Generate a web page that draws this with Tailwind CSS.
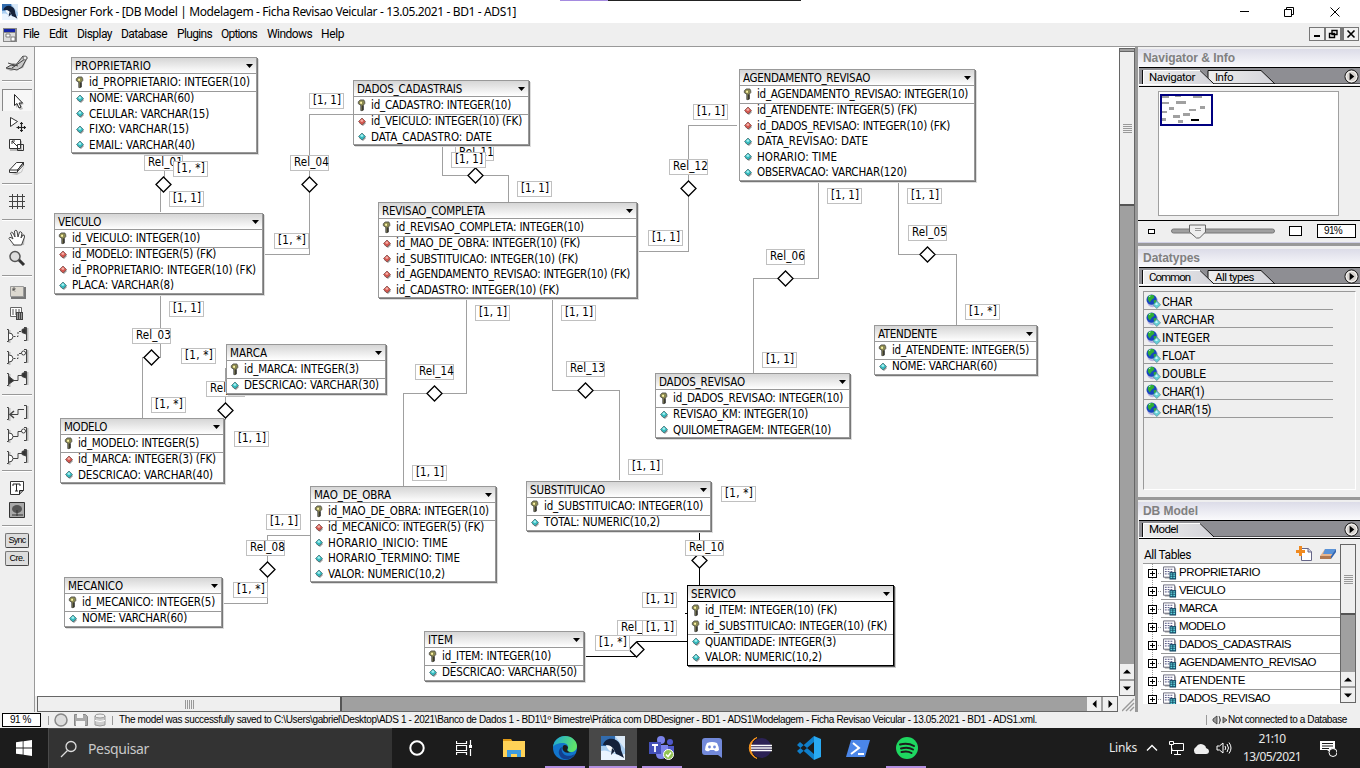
<!DOCTYPE html>
<html lang="pt-BR">
<head>
<meta charset="utf-8">
<title>DBDesigner Fork</title>
<script src="https://cdn.jsdelivr.net/npm/@tailwindcss/browser@4"></script>
</head>
<body class="w-[1360px] h-[768px] overflow-hidden flex flex-col bg-white text-black font-['Liberation_Sans',sans-serif] text-[12px] leading-none whitespace-nowrap">

<svg class="hidden">
  <symbol id="key" viewBox="0 0 10 14"><path d="M3 13V5h4v6l-1 2z" fill="#999" /><path d="M1 3l2-2h4l1 2v2L6 7v5l-1 1-1-1V7L1 5z" fill="#8a8850" stroke="#444" stroke-width=".8"/><path d="M3 3h2v2H3z" fill="#fff7a8"/><path d="M6 7v5" stroke="#111" /></symbol>
  <symbol id="blue" viewBox="0 0 10 10"><path d="M5 2l4 4-3 3-4-3z" fill="#999"/><path d="M5 1l3.500 3.500L5 8 1.500 4.500z" fill="#35b8bc" stroke="#4a7478" stroke-width=".8"/><path d="M5 2l1.500 2L5 5 3 4z" fill="#a5f3f3"/></symbol>
  <symbol id="red" viewBox="0 0 10 10"><path d="M5 2l4 4-3 3-4-3z" fill="#999"/><path d="M5 1l3.500 3.500L5 8 1.500 4.500z" fill="#d2574f" stroke="#84504c" stroke-width=".8"/><path d="M5 2l1.500 2L5 5 3 4z" fill="#f8b0a8"/></symbol>
  <symbol id="globe" viewBox="0 0 16 16"><circle cx="7" cy="8" r="6" fill="#b9b5e0"/><circle cx="6" cy="6" r="5.500" fill="#1746c0"/><path d="M4 1l4 0 1 3-3 2-2 3-2-3 0-3zM8 7l3-1 0 3-2 2z" fill="#2fae36"/><path d="M3 2l2-.5-1 2z" fill="#c8f0ff"/><path d="M11.500 7.500l4 4-4 4-4-4z" fill="#62cfd6" stroke="#5b8c98" stroke-width=".8"/><path d="M11 9l2 2-2 1-1.500-1z" fill="#c9f8f8"/></symbol>
  <symbol id="tbl" viewBox="0 0 15 14"><path d="M2 2h12v11H2z" fill="#aaa"/><path d="M.5.5h12v11H.5z" fill="#fff" stroke="#667"/><path d="M2 3h9M2 5.500h9M2 8h9" stroke="#447" stroke-dasharray="2 1"/><path d="M7 6h7v8H7z" fill="#164a66"/><path d="M8 8h2M11 8h2M8 10h2M11 10h2M8 12h2M11 12h2" stroke="#7ff"/></symbol>
  <symbol id="play" viewBox="0 0 16 16"><circle cx="8" cy="8" r="7" fill="#d8d4d0" stroke="#111"/><circle cx="8" cy="8" r="5.600" fill="none" stroke="#fff" stroke-width=".8"/><path d="M6 4v8l5-4z" fill="#000"/></symbol>
  <symbol id="whale" viewBox="0 0 24 24"><path d="M0 0h24v24H0z" fill="#a9cdf0"/><path d="M0 0h14v10H0z" fill="#326cae"/><path d="M14 0h10v13z" fill="#dbe9f7"/><path d="M0 15c8-3 12 6 24 3v6H0z" fill="#eaf4ff"/><path d="M2 9c1-5 7-8 13-5 4 2 5 7 5 10 1 3 2 5 3 8-3-2-5-3-8-4-2-6-6-9-13-9z" fill="#13203a"/><path d="M5 9c5 0 8 3 9 8-5-1-8-4-9-8z" fill="#f4f8fc"/><path d="M11 12l-1 7 4-4z" fill="#13203a"/></symbol>
</svg>

<!-- window title -->
<header class="h-[23px] shrink-0 flex items-center relative">
  <div class="absolute left-[560px] top-0 w-[241px] h-px bg-[#222]"></div><div class="absolute left-[560px] top-0 w-[48px] h-px bg-[#a58be0]"></div>
  <svg class="ml-[2px] w-4 h-4"><use href="#whale"/></svg>
  <span data-w="493" class="ml-[5px] font-['Noto_Sans',sans-serif] text-[12px]">DBDesigner Fork - [DB Model | Modelagem - Ficha Revisao Veicular - 13.05.2021 - BD1 - ADS1]</span>
  <svg class="ml-auto mr-[10px] w-[110px] h-[20px]" fill="none" stroke="#000"><path d="M-1 9.500h10M44.500 7.500h7v7h-7zM46.500 7.500v-2h7v7h-2M90.500 5.500l9 9M99.500 5.500l-9 9"/></svg>
</header>

<!-- menu -->
<nav class="h-[24px] shrink-0 bg-[#efefef] border-b border-[#999] flex items-center">
  <svg class="ml-[3px] w-[14px] h-[14px]"><path d="M0 0h14v14H0z" fill="#888"/><path d="M1 1h11v3H1z" fill="#1424a8"/><path d="M1 5h11v8H1z" fill="#ddd"/><path d="M3 6h4v3H3zM8 9h4v4H8z" fill="#fff" stroke="#666" stroke-width=".8"/></svg>
  <div class="flex items-center h-full -mt-px font-['Roboto',sans-serif]">
    <span data-w="16" class="ml-[6px]">File</span><span data-w="18" class="ml-[10px]">Edit</span><span data-w="35" class="ml-[10px]">Display</span><span data-w="46" class="ml-[9px]">Database</span><span data-w="35" class="ml-[10px]">Plugins</span><span data-w="36" class="ml-[9px]">Options</span><span data-w="45" class="ml-[10px]">Windows</span><span data-w="23" class="ml-[9px]">Help</span>
  </div>
  <svg class="ml-auto mr-px w-[50px] h-[14px] -mt-px"><path d="M0 0h50v14H0z" fill="#777"/><path d="M1 1h14v12H1zM17 1h14v12H17zM35 1h14v12H35z" fill="#f1f1f1"/><path d="M5 8h6v2H5z"/><path d="M23 3.500h5v4h-5zM20.500 6.500h5v4h-5z" fill="none" stroke="#000" stroke-width="1.400"/><path d="M38.500 3.500l7 7M45.500 3.500l-7 7" stroke="#000" stroke-width="1.600"/></svg>
</nav>

<div class="h-[665px] shrink-0 flex">
  <!-- tool palette -->
  <aside class="w-[35px] shrink-0 bg-[#efefef] border-r border-[#999] flex flex-col items-center">
    <svg class="mt-[7px] w-[24px] h-[20px]"><path d="M1 15l7-6 6 1 6-8 3 1-5 11-9 2-3 1z" fill="#aaa"/><path d="M1 14l5-3 4 1 8-10 4 2-5 9-5 3-5-1zM3 9l10 3M7 14l13-9" fill="#c9c9c9" stroke="#444"/><circle cx="20" cy="4" r="2" fill="#eee" stroke="#666"/></svg>
    <div class="mt-[6px] w-[30px] h-[2px] bg-[#999] border-b border-white"></div>
    <div class="mt-[7px] w-[30px] h-[22px] bg-[#f7f7f7] border-t border-l border-[#888] flex justify-center items-center"><svg class="ml-[3px] mt-[2px] w-[12px] h-[17px]"><path d="M3 3l8 8-3 1 2 4-3 1-2-4-2 2z" fill="#bbb"/><path d="M1.500 1.500v11l2.500-2 2 4.500 2-1-2-4h3.500z" fill="#fff" stroke="#222"/></svg></div>
    <svg class="mt-[4px] w-[18px] h-[20px]"><path d="M2.500 2.500v9l7-5z" fill="#fff" stroke="#333"/><path d="M13.500 7v10M8.500 12.500h10M12 8.500h3M12 15.500h3M10.500 11v3M16.500 11v3" stroke="#222" stroke-width="1.200"/></svg>
    <svg class="mt-[3px] w-[18px] h-[16px]"><path d="M2 3h12v10H2z" fill="#bbb"/><path d="M1.500 1.500h11v9h-11z" fill="#fff" stroke="#333"/><path d="M4 3l5 5M4 6V3h3" fill="none" stroke="#333"/><path d="M9.500 6.500h6v6h-6z" fill="none" stroke="#333"/></svg>
    <svg class="mt-[6px] w-[18px] h-[16px]"><path d="M3 14l10-2 4-8-3 8-5 3z" fill="#bbb"/><path d="M1.500 10l7-7.500h7l-6 7.500zM1.500 10v2.500h7l7-7.500V2.500l-6 7.500v2.500" fill="#fff" stroke="#333"/></svg>
    <div class="mt-[7px] w-[30px] h-[2px] bg-[#999] border-b border-white"></div>
    <svg class="mt-[8px] w-[18px] h-[18px]"><path d="M4.500 1v15M9.500 1v15M14.500 1v15M1 3.500h16M1 8.500h16M1 13.500h16" stroke="#444"/></svg>
    <div class="mt-[8px] w-[30px] h-[2px] bg-[#999] border-b border-white"></div>
    <svg class="mt-[8px] w-[18px] h-[18px]"><path d="M4 17l12-1 1-10-5-3z" fill="#bbb"/><path d="M6 16L1 9.500Q1 8 3 8.500L5 10 2.500 4Q3 2.500 5 4l2 4-.5-6Q8 .5 9 2l1 6 1.500-5Q13 2 14 4l-1 5 2-3q2 0 1.500 2l-3 8z" fill="#fff" stroke="#444"/></svg>
    <svg class="mt-[3px] w-[18px] h-[18px]"><path d="M10 9l6 6" stroke="#333" stroke-width="3"/><circle cx="7" cy="6.500" r="5" fill="#ddd" stroke="#555" stroke-width="1.500"/></svg>
    <div class="mt-[7px] w-[30px] h-[2px] bg-[#999] border-b border-white"></div>
    <svg class="mt-[8px] w-[17px] h-[14px]"><path d="M2 2h15v12H2z" fill="#777"/><path d="M1.500 1.500h13v10h-13z" fill="#ddd9d0" stroke="#999"/><path d="M4 6V3h2v1.500H4l2 2" fill="none" stroke="#444" stroke-width=".7"/></svg>
    <svg class="mt-[7px] w-[16px] h-[16px]"><path d="M1.500 1.500h11v9h-11z" fill="#fff" stroke="#666"/><path d="M3 4h9M3 6h9M3 8h9" stroke="#555" stroke-dasharray="2 1"/><path d="M7 6h7v8H7z" fill="#444"/><path d="M8 8h5M8 10h5M8 12h5" stroke="#eee" stroke-dasharray="1 1"/></svg>
    <div id="relA" class="mt-[2px]"></div>
    <div class="mt-[4px] w-[30px] h-[2px] bg-[#999] border-b border-white"></div>
    <div id="relB" class="mt-[6px]"></div>
    <div class="mt-[2px] w-[30px] h-[2px] bg-[#999] border-b border-white"></div>
    <svg class="mt-[8px] w-[16px] h-[17px]"><path d="M1.500 1.500h13v9l-4 4h-9z" fill="#fff" stroke="#333"/><path d="M14.500 10.500h-4v4" fill="#999" stroke="#222"/><path d="M4 6V4h7v2M7.500 4v7M6 11h3" fill="none" stroke="#222"/></svg>
    <svg class="mt-[5px] w-[16px] h-[16px]"><path d="M.5.5h15v15H.5z" fill="#aaa" stroke="#333"/><ellipse cx="8" cy="7" rx="5" ry="4" fill="#555"/><path d="M8 8v6M3 13h11" stroke="#333"/></svg>
    <div class="mt-[7px] w-[30px] h-[2px] bg-[#999] border-b border-white"></div>
    <div class="mt-[6px] w-[24px] h-[15px] border border-[#777] border-b-[#444] border-r-[#444] rounded-[2px] bg-[#ddd] flex items-center justify-center text-[9px]"><span data-w="17">Sync</span></div>
    <div class="mt-[3px] w-[24px] h-[15px] border border-[#777] border-b-[#444] border-r-[#444] rounded-[2px] bg-[#ddd] flex items-center justify-center text-[9px]"><span data-w="15">Cre.</span></div>
  </aside>

  <!-- model canvas with scrollbars -->
  <div class="w-[1100px] shrink-0 flex flex-col">
    <div class="h-[649px] flex">
      <main id="canvas" class="relative w-[1084px] h-[649px] overflow-hidden bg-white font-['DejaVu_Sans_Condensed','DejaVu_Sans',sans-serif] [font-stretch:75%] text-[11.500px]"></main>
      <div class="w-[16px] mt-px border border-[#666] bg-[#a0a0a0] flex flex-col">
        <div class="h-[3px] border-b border-[#666]"></div>
        <div class="h-[154px] bg-[#efefef] border-b-[2px] border-[#555] flex flex-col items-center justify-center gap-px">
          <div class="w-[9px] h-px bg-[#999]"></div><div class="w-[9px] h-px bg-[#999]"></div><div class="w-[9px] h-px bg-[#999]"></div><div class="w-[9px] h-px bg-[#999]"></div><div class="w-[9px] h-px bg-[#999]"></div>
        </div>
        <div class="mt-auto h-[15px] bg-[#efefef] flex items-center justify-center"><svg class="w-[8px] h-[5px]"><path d="M0 4.500L4 .5l4 4z"/></svg></div>
        <div class="mt-[2px] h-[14px] bg-[#efefef] flex items-center justify-center"><svg class="w-[8px] h-[5px]"><path d="M0 .5l4 4 4-4z"/></svg></div>
      </div>
    </div>
    <div class="h-[16px] flex bg-[#efefef]">
      <div class="ml-[2px] w-[1081px] h-[16px] border border-[#666] bg-[#a0a0a0] flex">
        <div class="w-[304px] bg-[#efefef] border-r-[2px] border-[#555] flex items-center justify-center gap-px"><div class="w-px h-[9px] bg-[#999]"></div><div class="w-px h-[9px] bg-[#999]"></div><div class="w-px h-[9px] bg-[#999]"></div><div class="w-px h-[9px] bg-[#999]"></div><div class="w-px h-[9px] bg-[#999]"></div></div>
        <div class="ml-auto w-[14px] bg-[#efefef] flex items-center justify-center"><svg class="w-[5px] h-[8px]"><path d="M4.500 0L.5 4l4 4z"/></svg></div>
        <div class="ml-[2px] w-[14px] bg-[#efefef] flex items-center justify-center"><svg class="w-[5px] h-[8px]"><path d="M.5 0l4 4-4 4z"/></svg></div>
      </div>
      <svg class="ml-[4px] w-[13px] h-[16px]"><path d="M0 15L12 3M4 15l8-8M8 15l4-4" stroke="#999" stroke-width="1.400"/></svg>
    </div>
  </div>

  <!-- side panels -->
  <aside class="w-[225px] shrink-0 bg-[#efefef] border-l-[3px] border-[#999] flex flex-col">
    <section class="h-[196px] shrink-0 flex flex-col border-b border-[#cfcfe4]">
      <h2 class="mt-[2px] h-[18px] bg-linear-to-b from-[#dcdce8] to-[#fafafc] flex items-center pl-[5px] text-[12px] font-bold text-[#808080]"><span data-w="92">Navigator &amp; Info</span></h2>
      <div class="ml-px h-[20px] border-t border-b border-black relative flex"><svg class="w-[221px] h-[18px]"><defs><linearGradient id="t" y2="0" x2="1"><stop stop-color="#eee"/><stop offset="1" stop-color="#d4d4da"/></linearGradient></defs><path d="M0 0h221v16H0z" fill="#8e8e93"/><path d="M69 16V2.500h53L136 16z" fill="url(#t)" stroke="#111"/><path d="M4 16V2.500h58L75 16z" fill="url(#t)"/><path d="M4.500 16V2.500h57" fill="none" stroke="#fff"/><path d="M3.500 16V2M61 2.500L75 16h146" fill="none" stroke="#111"/><path d="M0 16.500h221" stroke="#fff"/></svg>
        <div class="absolute inset-0 flex items-center pt-px text-[11.500px] font-['Roboto',sans-serif]"><span data-w="46" class="ml-[10px]">Navigator</span><span data-w="18" class="ml-[20px]">Info</span><svg class="ml-auto mr-px w-[15px] h-[15px] -mt-[3px]"><use href="#play"/></svg></div></div>
      <div class="h-[134px] pt-[4px] flex border-b border-black">
        <div class="ml-[20px] w-[181px] h-[125px] border border-[#a0a0a0] bg-white p-[2px] pl-px">
          <svg class="w-[53px] h-[32px]" shape-rendering="crispEdges"><path d="M1 1h51v30H1z" fill="#fff" stroke="#000080" stroke-width="2"/><path d="M2 2h7v2H2zM15 2h6v1h-6zM33 2h9v2h-9zM2 8h7v2H2zM16 7h10v3H16zM9 13h5v3H9zM40 12h5v3h-5zM29 15h7v2h-7zM2 17h5v2H2zM13 21h7v3h-7zM23 19h7v3h-7zM2 24h4v3H2zM18 26h5v3h-5z" fill="#a0a0a0"/><path d="M31 25h8v2h-8z"/></svg>
        </div>
      </div>
      <div class="h-[20px] flex items-center">
        <div class="ml-[10px] w-[7px] h-[5px] border border-black bg-white"></div>
        <svg class="ml-[16px] w-[104px] h-[16px]"><rect x=".5" y="6" width="103" height="4" rx="2" fill="#a0a0a0" stroke="#777"/><path d="M18.500 2h16v7l-6 6h-3l-7-6z" fill="#eee" stroke="#666"/><path d="M24 5.500h6M24 7.500h6" stroke="#999"/></svg>
        <div class="ml-[14px] w-[13px] h-[10px] border border-black bg-white"></div>
        <div class="ml-[15px] w-[39px] h-[14px] border border-black bg-white flex items-center pl-[6px] text-[10px]"><span data-w="18">91%</span></div>
      </div>
    </section>
    <section class="h-[254px] shrink-0 flex flex-col border-t-[3px] border-[#999] border-b-0">
      <h2 class="mt-[3px] h-[18px] bg-linear-to-b from-[#dcdce8] to-[#fafafc] flex items-center pl-[5px] text-[12px] font-bold text-[#808080]"><span data-w="57">Datatypes</span></h2>
      <div class="ml-px h-[20px] shrink-0 border-t border-b border-black relative flex"><svg class="w-[221px] h-[18px]"><path d="M0 0h221v16H0z" fill="#8e8e93"/><path d="M69 16V2.500h53L136 16z" fill="url(#t)" stroke="#111"/><path d="M4 16V2.500h58L75 16z" fill="url(#t)"/><path d="M4.500 16V2.500h57" fill="none" stroke="#fff"/><path d="M3.500 16V2M61 2.500L75 16h146" fill="none" stroke="#111"/><path d="M0 16.500h221" stroke="#fff"/></svg>
        <div class="absolute inset-0 flex items-center pt-px text-[11.500px] font-['Roboto',sans-serif]"><span data-w="41" class="ml-[10px]">Common</span><span data-w="39" class="ml-[25px]">All types</span><svg class="ml-auto mr-px w-[15px] h-[15px] -mt-[3px]"><use href="#play"/></svg></div></div>
      <div id="types" class="mt-[4px] ml-[5px] w-[213px] h-[199px] border-t border-l border-[#999] border-r border-b border-r-white border-b-white font-['Roboto',sans-serif]"></div>
    </section>
    <section class="h-[215px] shrink-0 flex flex-col border-t-[3px] border-[#999]">
      <h2 class="mt-[2px] h-[18px] shrink-0 bg-linear-to-b from-[#dcdce8] to-[#fafafc] flex items-center pl-[5px] text-[12px] font-bold text-[#808080]"><span data-w="55">DB Model</span></h2>
      <div class="ml-px h-[19px] shrink-0 border-t border-b border-black relative flex"><svg class="w-[221px] h-[17px]"><path d="M0 0h221v16H0z" fill="#8e8e93"/><path d="M4 16V2.500h58L75 16z" fill="url(#t)"/><path d="M4.500 16V2.500h57" fill="none" stroke="#fff"/><path d="M3.500 16V2M61 2.500L75 16h146" fill="none" stroke="#111"/><path d="M0 16.500h221" stroke="#fff"/></svg>
        <div class="absolute inset-0 flex items-center pt-px text-[11.500px] font-['Roboto',sans-serif]"><span data-w="29" class="ml-[10px]">Model</span><svg class="ml-auto mr-px w-[15px] h-[15px] -mt-px"><use href="#play"/></svg></div></div>
      <div class="flex ml-[5px] mt-[5px] h-[160px]">
        <div class="w-[197px] flex flex-col overflow-hidden">
          <div class="h-[20px] shrink-0 flex items-center border-b border-[#999]"><span data-w="47" class="ml-px mt-[2px] font-['Roboto',sans-serif]">All Tables</span><svg class="ml-auto w-[16px] h-[16px]"><path d="M5.500 2.500h7l3 3v9h-10z" fill="#fff" stroke="#668"/><path d="M12 2v4h4" fill="#ccd" stroke="#668"/><path d="M0 4h3V0h3v4h3v3H6v3H3V7H0z" fill="#f08a20"/></svg><svg class="ml-[8px] mr-[4px] w-[16px] h-[16px]"><path d="M0 10l5-7h11l-5 7z" fill="#e8b58c"/><path d="M5 3h11l-3 5H3z" fill="#5a93d8"/><path d="M0 10h11v3H0z" fill="#b07850"/><path d="M11 10l5-7v3l-5 7z" fill="#2f62ae"/></svg></div>
          <div id="tree" class="flex flex-col pl-[18px] bg-white text-[11.500px]"></div>
        </div>
        <div class="w-[16px] h-[159px] border border-[#666] bg-[#a0a0a0] flex flex-col">
          <div class="h-[70px] bg-[#efefef] border-b-[2px] border-[#555] flex flex-col items-center justify-center gap-px"><div class="w-[9px] h-px bg-[#999]"></div><div class="w-[9px] h-px bg-[#999]"></div><div class="w-[9px] h-px bg-[#999]"></div><div class="w-[9px] h-px bg-[#999]"></div><div class="w-[9px] h-px bg-[#999]"></div></div>
          <div class="mt-auto h-[14px] bg-[#efefef] flex items-center justify-center"><svg class="w-[8px] h-[5px]"><path d="M0 4.500L4 .5l4 4z"/></svg></div>
          <div class="mt-[2px] h-[14px] bg-[#efefef] flex items-center justify-center"><svg class="w-[8px] h-[5px]"><path d="M0 .5l4 4 4-4z"/></svg></div>
        </div>
      </div>
    </section>
  </aside>
</div>

<!-- status bar -->
<footer class="h-[16px] shrink-0 bg-[#efefef] flex items-center text-[10px]">
  <div class="ml-[2px] w-[39px] h-[14px] border border-black bg-white flex items-center pl-[7px]"><span data-w="21">91 %</span></div>
  <div class="ml-[7px] w-px h-[9px] bg-[#999]"></div>
  <svg class="ml-[5px] w-[54px] h-[16px]"><circle cx="7" cy="8" r="6" fill="#ddd" stroke="#888" stroke-width="1.500"/><path d="M20.500 2.500h11l2 2v9h-13z" fill="#aaa" stroke="#888"/><path d="M23 2h6v4h-6zM22 9h9v5h-9z" fill="#f4f4f4"/><path d="M41 4v9q5 2 10 0V4z" fill="#ccc" stroke="#999"/><ellipse cx="46" cy="4" rx="5" ry="2" fill="#eee" stroke="#999"/><path d="M41 8.500q5 2 10 0" fill="none" stroke="#fff"/></svg>
  <div class="ml-[4px] w-px h-[9px] bg-[#999]"></div>
  <span data-w="918" class="ml-[6px]">The model was successfully saved to C:\Users\gabriel\Desktop\ADS 1 - 2021\Banco de Dados 1 - BD1\1º Bimestre\Prática com DBDesigner - BD1 - ADS1\Modelagem - Ficha Revisao Veicular - 13.05.2021 - BD1 - ADS1.xml.</span>
  <div class="ml-auto w-px h-[10px] bg-[#999]"></div>
  <svg class="ml-[5px] w-[16px] h-[12px]"><path d="M5 2v8L1 7V5zM7 2q3 4 0 8M11 3v6l4-3z" fill="#999" stroke="#333" stroke-width=".8"/></svg>
  <span data-w="119" class="mr-[13px]">Not connected to a Database</span>
</footer>

<!-- taskbar -->
<div class="h-[40px] shrink-0 bg-[#1c1c1c] flex items-center text-[#e8e8e8] font-['Noto_Sans',sans-serif]">
  <div class="w-[48px] flex justify-center"><svg class="w-[16px] h-[16px]" fill="#fff"><path d="M0 2.300l6.700-1v6.200H0zM7.500 1.200L16 0v7.500H7.500zM0 8.400h6.700v6.200L0 13.700zM7.500 8.400H16V16l-8.500-1.200z"/></svg></div>
  <div class="w-[344px] h-full bg-[#333] border-l border-t border-[#4a4a4a] flex items-center"><svg class="ml-[11px] w-[18px] h-[18px]" fill="none" stroke="#ddd" stroke-width="1.300"><circle cx="11" cy="6.500" r="5"/><path d="M7.500 10.500L1 17"/></svg><span data-w="61" class="ml-[10px] text-[14px] text-[#c8c8c8]">Pesquisar</span></div>
  <div class="h-full flex text-white">
    <div class="w-[49px] h-full flex items-center justify-center"><svg class="w-4 h-4"><circle cx="8" cy="8" r="6.700" fill="none" stroke="#fff" stroke-width="2"/></svg></div>
    <div class="w-[46px] h-full flex items-center justify-center"><svg class="w-4 h-4" fill="none" stroke="#fff" stroke-width="1.200"><path d="M.5 1v2.500h10V1M.5 5.500h10v5H.5zM.5 15v-2.500h10V15M14.500 0v5M14.500 9v7"/><path d="M13 5h3v3h-3z" fill="#fff" stroke="none"/></svg></div>
    <div class="w-[54px] h-full flex items-center justify-center"><svg class="w-[22px] h-[20px]"><path d="M0 1h8l2 3H0z" fill="#e09a16"/><path d="M0 3h22v16H0z" fill="#ffd257"/><path d="M4 12h14v7h-4v-3H8v3H4z" fill="#3d9be0"/></svg></div>
    <div class="w-[48px] h-full flex items-center justify-center relative"><svg class="w-6 h-6" viewBox="0 0 24 24"><defs><linearGradient id="e" x1="0" y1="0" x2="1" y2=".3"><stop stop-color="#1aa5da"/><stop offset="1" stop-color="#5fe36b"/></linearGradient></defs><circle cx="12" cy="12" r="12" fill="#1275cc"/><path d="M0 11C1 4 6 0 12 0c7 0 12 5 12 10 0 4-3 6-6 6-4 0-4-2-3-3 1-4-2-6-5-6-5 0-9 2-10 4z" fill="url(#e)"/><path d="M9 11c-2 6 4 12 13 7-4 7-14 7-16 0-1-3 1-6 3-7z" fill="#123f8f"/><path d="M10 10c1-2 5-1 5 2-2 2 0 4 3 4-5 2-10-1-8-6z" fill="#1c1c1c"/></svg><i class="absolute left-[4px] bottom-0 w-[40px] h-[2px] bg-[#b28fe0]"></i></div>
    <div class="w-[48px] h-full bg-[#484848] border-b-[2px] border-[#b28fe0] flex items-center justify-center"><svg class="w-6 h-6 mt-px"><use href="#whale"/></svg></div>
    <div class="w-[50px] h-full flex items-center justify-center relative"><svg class="w-[26px] h-[24px]"><circle cx="12" cy="4" r="4" fill="#7b83eb"/><circle cx="21" cy="6" r="3" fill="#5059c9"/><path d="M17 10h8v7q-1 4-6 4z" fill="#5059c9"/><path d="M7 9h12v9q-2 5-7 5t-5-5z" fill="#7b83eb"/><path d="M0 6h12v12H0z" fill="#4450b8"/><path d="M3 9h6M6 9v7" stroke="#fff" stroke-width="1.800"/><circle cx="19.500" cy="18.500" r="5" fill="#92c353" stroke="#fff"/><path d="M17 18.500l2 2 3-4" fill="none" stroke="#fff" stroke-width="1.500"/></svg><i class="absolute left-[5px] bottom-0 w-[40px] h-[2px] bg-[#b28fe0]"></i></div>
    <div class="w-[49px] h-full flex items-center justify-center"><svg class="w-[20px] h-[22px]"><path d="M3 1h14q3 0 3 3v17l-4-3H3q-3 0-3-3V4q0-3 3-3z" fill="#7289da"/><path d="M5 6q5-2 10 0 2 4 2 7-2 2-4 1l-1-1H8l-1 1q-2 1-4-1 0-4 2-7z" fill="#fff"/><circle cx="7.500" cy="10" r="1.400" fill="#7289da"/><circle cx="12.500" cy="10" r="1.400" fill="#7289da"/></svg></div>
    <div class="w-[48px] h-full flex items-center justify-center"><svg class="w-[24px] h-[22px]"><path d="M9 .5a11 11 0 000 21 12 12 0 010-21z" fill="#f7941e" stroke="#f7941e"/><circle cx="13.500" cy="11" r="10" fill="#2c2255"/><path d="M3 8.500h21M3 11h21M3 13.500h21" stroke="#fff" stroke-width="1.300"/></svg></div>
    <div class="w-[49px] h-full flex items-center justify-center"><svg class="w-6 h-6"><path d="M17 0l7 3v18l-7 3z" fill="#29a9f2"/><path d="M17 0v6L3 18l-3-3zM17 24v-6L3 6 0 9z" fill="#0f7fcb"/></svg></div>
    <div class="w-[49px] h-full flex items-center justify-center"><svg class="w-[24px] h-[19px]"><path d="M5 1h19l-5 17H0z" fill="#4b86e8"/><path d="M7 4l6 5-8 6M12 15h6" fill="none" stroke="#fff" stroke-width="2"/></svg></div>
    <div class="w-[49px] h-full flex items-center justify-center relative"><svg class="w-[22px] h-[22px]"><circle cx="11" cy="11" r="11" fill="#1ed760"/><path d="M4 7.500q8-2 14 1.500M5 11.500q7-2 12 1M5.500 15q6-1.500 10 1" fill="none" stroke="#1c1c1c" stroke-width="2" stroke-linecap="round"/></svg><i class="absolute left-[4px] bottom-0 w-[40px] h-[2px] bg-[#b28fe0]"></i></div>
  </div>
  <div class="ml-auto mr-[23px] flex items-center">
  <span data-w="28" class="text-[12px]">Links</span>
  <svg class="ml-[9px] w-[12px] h-[8px]"><path d="M1 6.500l5-5 5 5" fill="none" stroke="#fff" stroke-width="1.400"/></svg>
  <svg class="ml-[10px] w-[16px] h-[14px]" fill="none" stroke="#fff"><path d="M5 2.500h10.500v7H4v-2M1.500.5h4v3h-4zM3.500 4v9M9.500 10v3M6 13.500h7"/></svg>
  <svg class="ml-[8px] w-[17px] h-[11px]"><path d="M4 11a4 4 0 010-7q3-5 8-2 2 1 2 3 3 1 3 3 0 3-3 3z" fill="#eee"/></svg>
  <svg class="ml-[7px] w-[16px] h-[14px]" fill="none" stroke="#fff"><path d="M1 5h2.500L7 2v10L3.500 9H1zM9 5q1.500 2 0 4M11 3q3 4 0 8M13 1.500q4 5.500 0 11"/></svg>
  <div class="ml-[10px] w-[60px] flex flex-col items-center gap-[6px] text-[12px]"><span data-w="27">21:10</span><span data-w="58">13/05/2021</span></div>
  <svg class="ml-[17px] w-[18px] h-[17px]"><path d="M1 1h15v9h-5l3 4-6-4H1z" fill="#fff"/><path d="M3 3.500h11M3 6h11M3 8.500h7" stroke="#1c1c1c"/><circle cx="14" cy="12.500" r="4" fill="#1c1c1c" stroke="#fff"/></svg>
  </div>
</div>

<script>
// k = primary key, r = foreign key column, b = plain column
const tables = [
 [71,57,258,154,'PROPRIETARIO',76,[['k','id_PROPRIETARIO: INTEGER(10)',161],['b','NOME: VARCHAR(60)',105],['b','CELULAR: VARCHAR(15)',120],['b','FIXO: VARCHAR(15)',100],['b','EMAIL: VARCHAR(40)',106]]],
 [54,213,264,295,'VEICULO',43,[['k','id_VEICULO: INTEGER(10)',128],['r','id_MODELO: INTEGER(5) (FK)',144],['r','id_PROPRIETARIO: INTEGER(10) (FK)',184],['b','PLACA: VARCHAR(8)',102]]],
 [353,80,530,146,'DADOS_CADASTRAIS',105,[['k','id_CADASTRO: INTEGER(10)',140],['r','id_VEICULO: INTEGER(10) (FK)',151],['b','DATA_CADASTRO: DATE',121]]],
 [378,202,638,299,'REVISAO_COMPLETA',103,[['k','id_REVISAO_COMPLETA: INTEGER(10)',188],['r','id_MAO_DE_OBRA: INTEGER(10) (FK)',184],['r','id_SUBSTITUICAO: INTEGER(10) (FK)',182],['r','id_AGENDAMENTO_REVISAO: INTEGER(10) (FK)',234],['r','id_CADASTRO: INTEGER(10) (FK)',163]]],
 [739,69,976,182,'AGENDAMENTO_REVISAO',127,[['k','id_AGENDAMENTO_REVISAO: INTEGER(10)',211],['r','id_ATENDENTE: INTEGER(5) (FK)',160],['r','id_DADOS_REVISAO: INTEGER(10) (FK)',193],['b','DATA_REVISAO: DATE',111],['b','HORARIO: TIME',80],['b','OBSERVACAO: VARCHAR(120)',150]]],
 [874,325,1038,376,'ATENDENTE',59,[['k','id_ATENDENTE: INTEGER(5)',137],['b','NOME: VARCHAR(60)',105]]],
 [655,373,851,439,'DADOS_REVISAO',86,[['k','id_DADOS_REVISAO: INTEGER(10)',170],['b','REVISAO_KM: INTEGER(10)',135],['b','QUILOMETRAGEM: INTEGER(10)',158]]],
 [226,344,387,395,'MARCA',37,[['k','id_MARCA: INTEGER(3)',115],['b','DESCRICAO: VARCHAR(30)',135]]],
 [60,418,225,484,'MODELO',43,[['k','id_MODELO: INTEGER(5)',121],['r','id_MARCA: INTEGER(3) (FK)',138],['b','DESCRICAO: VARCHAR(40)',135]]],
 [310,486,497,583,'MAO_DE_OBRA',77,[['k','id_MAO_DE_OBRA: INTEGER(10)',161],['r','id_MECANICO: INTEGER(5) (FK)',156],['b','HORARIO_INICIO: TIME',120],['b','HORARIO_TERMINO: TIME',132],['b','VALOR: NUMERIC(10,2)',117]]],
 [526,481,712,532,'SUBSTITUICAO',75,[['k','id_SUBSTITUICAO: INTEGER(10)',159],['b','TOTAL: NUMERIC(10,2)',116]]],
 [687,585,895,667,'SERVICO',45,[['k','id_ITEM: INTEGER(10) (FK)',132],['k','id_SUBSTITUICAO: INTEGER(10) (FK)',182],['b','QUANTIDADE: INTEGER(3)',131],['b','VALOR: NUMERIC(10,2)',117]]],
 [424,631,585,682,'ITEM',25,[['k','id_ITEM: INTEGER(10)',109],['b','DESCRICAO: VARCHAR(50)',135]]],
 [64,577,223,628,'MECANICO',55,[['k','id_MECANICO: INTEGER(5)',133],['b','NOME: VARCHAR(60)',105]]]
];
const rels = [['04',290,155],['01',144,155],['11',455,145],['12',669,159],['05',908,225],['06',766,249],['03',132,328],['02',206,381],['14',415,364],['13',566,361],['08',246,540],['10',685,540],['09',617,620]];
const cards = [['1',309,93],['*',274,233],['*',173,161],['1',169,191],['1',451,152],['1',517,181],['1',693,104],['1',648,230],['1',827,188],['1',907,188],['*',965,304],['1',762,352],['1',475,305],['1',561,305],['1',169,301],['*',181,348],['*',151,397],['1',234,431],['1',412,465],['1',628,459],['*',721,486],['1',266,514],['*',233,582],['1',642,592],['1',642,620],['*',595,635]];
const gems = [[163.5,184.5],[309.5,184.5],[475.5,175.5],[688.5,188.5],[927.5,254.5],[785.5,278.5],[151.5,357.5],[225.5,410.5],[434.5,393.5],[585.5,390.5],[267.5,569.5],[699.5,560.5],[636.5,649.5]];
const OX = 35, OY = 47;
const at = (x, y) => `left:${x - OX}px;top:${y - OY}px`;
const gemPath = gems.map(([x, y]) => `M${x - 7.5} ${y}l7.500-7.500 7.500 7.500-7.500 7.500z`).join('');

let h = `<svg class="absolute inset-0 w-full h-full" viewBox="35 47 1084 649" fill="none">
<g shape-rendering="crispEdges"><path stroke="#a0a0a0" d="M164.500 171V178M160.500 187V212M353 114.500H309.500V254.500H264M442.500 146V175.500H508.500V202M737 125.500H688.500V251.500H638M818.500 183V278.500H753.500V373M898.500 183V254.500H956.500V325M466.500 299V393.500H403.500V486M552.500 299V390.500H619.500V480M160.500 296V357.500H142.500V418M226 368.500H225.500V452.500H226M310 535.500H267.500V603.500H223"/>
<path stroke="#000" d="M699.500 532V585M586 656.500H637M637 641.500H687M685 613.500H687"/></g>
</svg>`;
const relBox = ([n, x, y]) => `<div class="absolute w-[39px] h-[16px] border border-[#c0c0c0] bg-white flex items-center pl-[3px]" style="${at(x, y)}"><span data-w="35">Rel_${n}</span></div>`;
h += rels.filter(r => r[0] !== '10').map(relBox).join('');
h += `<svg class="absolute inset-0 w-full h-full" viewBox="35 47 1084 649"><path d="${gemPath}" fill="#fff" stroke="#000" stroke-width="1.300"/></svg>`;
h += relBox(['10', 685, 540]);
h += cards.map(([n, x, y]) => `<div class="absolute w-[35px] h-[16px] border border-[#c0c0c0] bg-white flex items-center pl-[3px]" style="${at(x, y)}"><span data-w="28">[1, ${n}]</span></div>`).join('');
const row = ([t, s, w]) => `<div class="h-[15.500px] flex items-center"><svg class="${t === 'k' ? 'w-[10px] h-[13px] ml-[3px] mr-[4px]' : 'w-[10px] h-[10px] ml-[3px] mr-[4px]'}"><use href="#${t === 'k' ? 'key' : t === 'r' ? 'red' : 'blue'}"/></svg><span data-w="${w}">${s}</span></div>`;
for (const [x, y, r, b, name, nw, rows] of tables) {
  const sel = name === 'SERVICO';
  h += `<section class="absolute bg-white border ${sel ? 'border-black shadow-[1px_1px_0_#555,2px_2px_0_#ccc]' : 'border-[#999] shadow-[1px_1px_0_#777,2px_2px_0_#ddd]'}" style="${at(x, y)};width:${r - x - 1}px;height:${b - y - 1}px">
  <div class="h-[16px] border-b ${sel ? 'border-black' : 'border-[#999]'} flex items-center bg-linear-to-b from-[#d6d6d6] to-white pl-[3px] pt-[3px]"><span data-w="${nw}">${name}</span><svg class="ml-auto mr-[3px] mb-[3px] w-[7px] h-[4px]"><path d="M0 0h7L3.500 4z"/></svg></div>
  <div class="border-b border-[#999] pt-px">${rows.filter(q => q[0] === 'k').map(row).join('')}</div>
  <div class="-mt-[0.500px]">${rows.filter(q => q[0] !== 'k').map(row).join('')}</div></section>`;
}
document.getElementById('canvas').innerHTML = h;

document.getElementById('types').innerHTML = [['CHAR',30],['VARCHAR',52],['INTEGER',48],['FLOAT',33],['DOUBLE',44],['CHAR(1)',42],['CHAR(15)',49]]
  .map(([s, w]) => `<div class="w-[189px] h-[18px] border-b border-[#999] flex items-center pt-px"><svg class="ml-[2px] w-[15px] h-[15px]"><use href="#globe"/></svg><span data-w="${w}" class="ml-[1px] mt-px">${s}</span></div>`).join('');

document.getElementById('tree').innerHTML = [['PROPRIETARIO',81],['VEICULO',46],['MARCA',38],['MODELO',46],['DADOS_CADASTRAIS',112],['AGENDAMENTO_REVISAO',137],['ATENDENTE',66],['DADOS_REVISAO',91]]
  .map(([s, w]) => `<div class="relative h-[18px] shrink-0 border-b border-[#999] flex items-center pt-px"><svg class="absolute left-[-14px] top-0 w-[14px] h-[18px]" fill="none" shape-rendering="crispEdges"><path d="M5.500 0v18M9 9.500h5" stroke="#999" stroke-dasharray="1 1"/><path d="M1.500 5.500h8v8h-8z" fill="#fff" stroke="#000"/><path d="M3 9.500h5M5.500 7v5" stroke="#000"/></svg><svg class="ml-[2px] w-[14px] h-[14px]"><use href="#tbl"/></svg><span data-w="${w}" class="ml-[2px]">${s}</span></div>`).join('');

// relationship tools: end markers and line style
const tool = (left, right, dash) => `<svg class="block w-[24px] h-[22px]" fill="none" stroke="#444"><path d="M4.500 6v13M22.500 4v13" stroke="#bbb" stroke-width="2"/><path d="M2 5.500h1.500v12H2M19 3.500h2.500v13H19"/><path d="M5 12.500h8V7.500h6" ${dash}/>${left}${right}</svg>`;
const openL = '<path d="M4 9q4 0 4 3.500T4 16" fill="#fff"/>', fillL = '<path d="M4 8.500l5 4-5 3.500z" fill="#333"/>', openR = '<circle cx="18.500" cy="7" r="2" fill="#fff"/>', fillR = '<path d="M21 4l-4 1.500v3L21 10z" fill="#333"/>', arrow = '<path d="M9 9l-4 3.500L9 16" stroke-width="1.500"/>', dots = 'stroke-dasharray="2 1.500"';
document.getElementById('relA').innerHTML = tool(openL, fillR, dots) + tool(openL, openR, dots) + tool(fillL, fillR, '');
document.getElementById('relB').innerHTML = tool(arrow, '', '') + tool(openL, openR, '') + tool(openL, fillR, '');

// spread each label's letters over its listed width
function fit() {
  const all = [...document.querySelectorAll('[data-w]')];
  for (const el of all) { el.style.flex = 'none'; el.style.letterSpacing = '0px'; }
  const widths = all.map(el => { const r = document.createRange(); r.selectNodeContents(el); return r.getBoundingClientRect().width; });
  all.forEach((el, i) => { el.style.letterSpacing = ((+el.dataset.w - widths[i]) / el.textContent.length).toFixed(3) + 'px'; });
}
fit();
addEventListener('load', fit);
document.fonts.ready.then(fit);
new MutationObserver(fit).observe(document.head, { childList: true });
for (const ms of [0, 30, 100, 250]) setTimeout(fit, ms);
</script>
</body>
</html>
